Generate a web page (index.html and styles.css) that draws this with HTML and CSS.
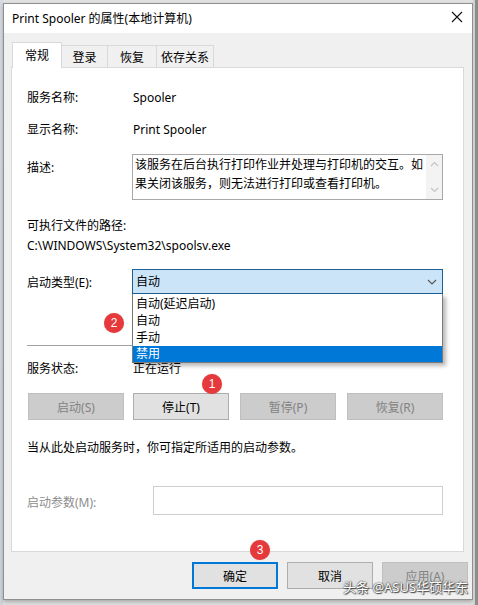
FILE: index.html
```html
<!DOCTYPE html>
<html>
<head>
<meta charset="utf-8">
<link rel="stylesheet" href="styles.css">
</head>
<body>
<div class="strip-left"></div>
<div class="dialog">
  <div class="titlebar">
    <span class="title">Print Spooler 的属性(本地计算机)</span>
    <svg class="close" width="12" height="12" viewBox="0 0 12 12"><path d="M1 1L11 11M11 1L1 11" stroke="#111" stroke-width="1.1" fill="none"/></svg>
  </div>
  <div class="tabs">
    <div class="tab active">常规</div>
    <div class="tab">登录</div>
    <div class="tab">恢复</div>
    <div class="tab">依存关系</div>
  </div>
  <div class="panel">
    <div class="row first"><div class="label">服务名称:</div><div class="value">Spooler</div></div>
    <div class="row gap12"><div class="label">显示名称:</div><div class="value">Print Spooler</div></div>
    <div class="desc-row">
      <div class="label desc-label">描述:</div>
      <div class="desc-box">
        <div class="desc-text"><span>该服务在后台执行打印作业并处理与打印机的交互。如</span><span>果关闭该服务，则无法进行打印或查看打印机。</span></div>
        <div class="scroll">
          <svg width="9" height="6" viewBox="0 0 9 6"><path d="M1 5L4.5 1.5L8 5" stroke="#c4c4c4" stroke-width="1.1" fill="none"/></svg>
          <svg width="9" height="6" viewBox="0 0 9 6"><path d="M1 1L4.5 4.5L8 1" stroke="#c4c4c4" stroke-width="1.1" fill="none"/></svg>
        </div>
      </div>
    </div>
    <div class="row gap15">可执行文件的路径:</div>
    <div class="row">C:\WINDOWS\System32\spoolsv.exe</div>
    <div class="combo-row">
      <div class="label">启动类型(E):</div>
      <div class="combo-wrap">
        <div class="combo">
          <span>自动</span>
          <svg width="10" height="6" viewBox="0 0 10 6"><path d="M1 1L5 5L9 1" stroke="#555" stroke-width="1.1" fill="none"/></svg>
        </div>
        <div class="list">
          <div class="item">自动(延迟启动)</div>
          <div class="item">自动</div>
          <div class="item">手动</div>
          <div class="item sel">禁用</div>
        </div>
      </div>
    </div>
    <div class="sep"></div>
    <div class="row gap12"><div class="label">服务状态:</div><div class="value">正在运行</div></div>
    <div class="btn-row">
      <div class="btn disabled">启动(S)</div>
      <div class="btn">停止(T)</div>
      <div class="btn disabled">暂停(P)</div>
      <div class="btn disabled">恢复(R)</div>
    </div>
    <div class="row hint">当从此处启动服务时，你可指定所适用的启动参数。</div>
    <div class="param-row">
      <div class="label param-label">启动参数(M):</div>
      <div class="param-input"></div>
    </div>
  </div>
  <div class="footer">
    <div class="btn fbtn default">确定</div>
    <div class="btn fbtn">取消</div>
    <div class="btn fbtn disabled">应用(A)</div>
  </div>
</div>
<div class="strip-right"></div>

<div class="badge b1">1</div>
<div class="badge b2">2</div>
<div class="badge b3">3</div>
<div class="watermark">头条 @ASUS华硕华东</div>
</body>
</html>
```

FILE: styles.css
```css
html, body {
  margin: 0;
  padding: 0;
}
body {
  width: 478px;
  height: 605px;
  overflow: hidden;
  display: flex;
  align-items: flex-start;
  background: #e2e2e2;
  font-family: "Noto Sans", "Noto Sans CJK SC", sans-serif;
  font-size: 12px;
  color: #000;
  position: relative;
}
.strip-left {
  width: 3px;
  height: 605px;
  background: linear-gradient(#d6dbe2, #cfd5dc);
}
.strip-right {
  flex: 1;
  height: 605px;
  background: linear-gradient(90deg, #d0d0d0 0, #d0d0d0 2px, #8c8c8c 2px);
}
.dialog {
  margin-top: 3px;
  width: 470px;
  height: 597px;
  box-sizing: border-box;
  border: 1px solid #8f8f8f;
  background: #f0f0f0;
  display: flex;
  flex-direction: column;
  box-shadow: 0 2px 4px rgba(0,0,0,0.25);
}
.titlebar {
  height: 29px;
  background: #fff;
  display: flex;
  align-items: center;
  justify-content: space-between;
  padding: 0 9px 0 8px;
  flex: none;
}
.title {
  font-size: 12px;
  margin-top: -1px;
}
.close {
  margin-top: -3px;
}
.tabs {
  height: 25px;
  margin-top: 9px;
  padding-left: 8px;
  display: flex;
  align-items: flex-end;
  flex: none;
  position: relative;
  z-index: 2;
}
.tab {
  height: 22px;
  box-sizing: border-box;
  border: 1px solid #d9d9d9;
  border-bottom: none;
  border-left: none;
  padding: 0;
  display: flex;
  align-items: center;
  justify-content: center;
  background: #f0f0f0;
  white-space: nowrap;
  flex: none;
}
.tab.active {
  width: 50px;
  background: #fff;
  border-left: 1px solid #d9d9d9;
  margin-bottom: -1px;
  height: 26px;
  padding-bottom: 1px;
}
.tab:nth-child(2) { width: 46px; }
.tab:nth-child(3) { width: 49px; }
.tab:nth-child(4) { width: 57px; }
.panel {
  margin: 0 8px 0 7px;
  height: 485px;
  box-sizing: border-box;
  background: #fff;
  border: 1px solid #d9d9d9;
  padding: 19px 0 0 15px;
  flex: none;
  display: flex;
  flex-direction: column;
}
.row {
  height: 20px;
  display: flex;
  align-items: center;
  white-space: nowrap;
}
.gap12 { margin-top: 12px; }
.gap15 { margin-top: 15px; }
.label {
  width: 105px;
  flex: none;
}
.value {
  padding-left: 1px;
}
.desc-row {
  margin-top: 15px;
  display: flex;
  height: 46px;
}
.desc-label {
  margin-top: 4px;
  line-height: 20px;
  height: 20px;
}
.desc-box {
  width: 311px;
  height: 46px;
  box-sizing: border-box;
  border: 1px solid #a8a8a8;
  display: flex;
}
.desc-text {
  flex: 1;
  padding-left: 2px;
  line-height: 19px;
  display: flex;
  flex-direction: column;
  white-space: nowrap;
}
.scroll {
  width: 16px;
  background: #f3f3f3;
  display: flex;
  flex-direction: column;
  align-items: center;
  justify-content: space-between;
  padding: 6px 0 6px;
}
.combo-row {
  margin-top: 14px;
  height: 25px;
  display: flex;
  align-items: center;
  position: relative;
  z-index: 5;
}
.combo-wrap {
  position: relative;
  width: 311px;
  height: 25px;
}
.combo {
  height: 25px;
  box-sizing: border-box;
  border: 1px solid #1b5f94;
  background: #cce4f7;
  display: flex;
  align-items: center;
  justify-content: space-between;
  padding: 0 5px 0 3px;
}
.combo span {
  margin-top: -1px;
}
.list {
  position: absolute;
  top: 25px;
  left: 0;
  width: 311px;
  box-sizing: border-box;
  height: 69px;
  border: 1px solid #7a7a7a;
  border-top: none;
  background: #fff;
  box-shadow: 3px 3px 4px rgba(0,0,0,0.28);
  padding-top: 1px;
}
.item {
  height: 17px;
  line-height: 17px;
  padding-left: 3px;
  white-space: nowrap;
}
.item.sel {
  height: 16px;
  line-height: 16px;
  background: #0078d7;
  color: #fff;
}
.sep {
  margin-top: 51px;
  width: 416px;
  height: 1px;
  background: #a0a0a0;
}
.btn-row {
  margin-top: 15px;
  display: flex;
  height: 27px;
  padding-left: 1px;
}
.btn {
  width: 96px;
  height: 27px;
  box-sizing: border-box;
  border: 1px solid #adadad;
  background: #e1e1e1;
  display: flex;
  align-items: center;
  justify-content: center;
  white-space: nowrap;
}
.btn-row .btn:nth-child(2) { margin-left: 9px; }
.btn-row .btn:nth-child(3) { margin-left: 11px; }
.btn-row .btn:nth-child(4) { margin-left: 11px; }
.btn.disabled {
  background: #cccccc;
  border-color: #bfbfbf;
  color: #838383;
}
.hint {
  margin-top: 17px;
}
.param-row {
  margin-top: 29px;
  display: flex;
  align-items: center;
  height: 29px;
}
.param-label {
  width: 126px;
  color: #8d8d8d;
  margin-top: 2px;
}
.param-input {
  width: 290px;
  height: 29px;
  box-sizing: border-box;
  border: 1px solid #cfcfcf;
  background: #fff;
}
.footer {
  margin-top: 10px;
  display: flex;
  justify-content: flex-end;
  padding-right: 4px;
  flex: none;
}
.fbtn {
  width: 86px;
  margin-left: 9px;
}
.fbtn.default {
  border: 2px solid #0078d7;
}
.badge {
  position: absolute;
  width: 20px;
  height: 20px;
  border-radius: 50%;
  background: #e5393b;
  color: #fff;
  font-family: "Liberation Sans", sans-serif;
  font-size: 12px;
  display: flex;
  align-items: center;
  justify-content: center;
  z-index: 20;
  box-shadow: 0 0 1px rgba(180,0,0,0.4);
}
.b1 { left: 202px; top: 374px; }
.b2 { left: 104px; top: 313px; }
.b3 { left: 250px; top: 540px; }
.watermark {
  position: absolute;
  left: 343px;
  top: 578px;
  font-size: 13px;
  line-height: 18px;
  color: #fff;
  white-space: nowrap;
  text-shadow: 0 0 2px #555, 0 0 1px #333, 1px 1px 1px #444;
  z-index: 20;
}
```
